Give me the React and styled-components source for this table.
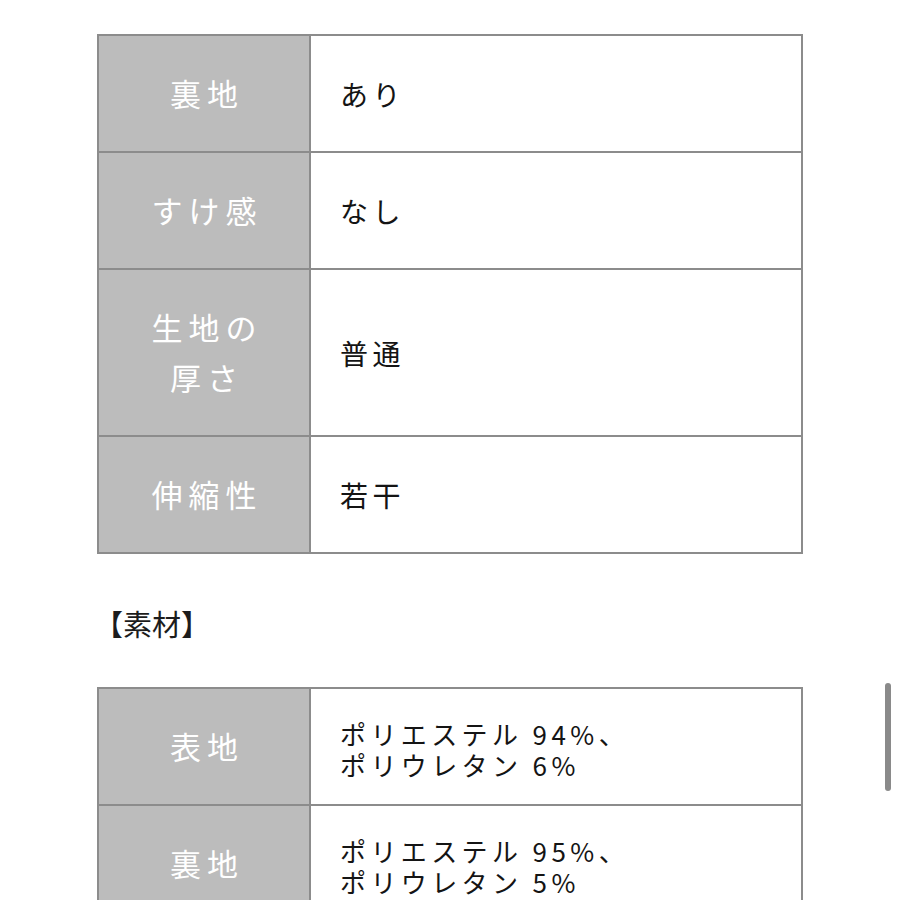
import React from "react";
import styled, { createGlobalStyle } from "styled-components";

const Global = createGlobalStyle`
  html, body { margin: 0; padding: 0; background: #fff; overflow: hidden; }
  body { font-family: "Noto Sans CJK JP", "Noto Sans", sans-serif; }
`;

const Page = styled.div`
  width: 900px;
  height: 900px;
  padding: 34px 0 0 97px;
  box-sizing: border-box;
  position: relative;
  overflow: hidden;
`;

const SpecTable = styled.table`
  width: 706px;
  border-collapse: collapse;
  border: 2px solid #8c8c8c;
  table-layout: fixed;
`;

const LabelCell = styled.th`
  width: 210px;
  background: #bcbcbc;
  color: #fff;
  font-weight: 400;
  font-size: 31px;
  line-height: 50px;
  letter-spacing: 6px;
  text-indent: 6px;
  padding: 32px 0 33px;
  border: 2px solid #8c8c8c;
  text-align: center;
  vertical-align: middle;
`;

const ValueCell = styled.td`
  background: #fff;
  color: #141414;
  font-size: ${(p) => (p.$small ? "26px" : "28px")};
  letter-spacing: ${(p) => (p.$small ? "4.4px" : "4.5px")};
  line-height: ${(p) => (p.$small ? "31px" : "40px")};
  padding: ${(p) => (p.$small ? "5px 20px 0 29px" : "0 20px 0 29px")};
  border: 2px solid #8c8c8c;
  vertical-align: middle;
`;

const Heading = styled.div`
  font-size: 29px;
  color: #1c1c1c;
  line-height: 40px;
  margin: 49px 0 44px -3px;
`;

const ScrollThumb = styled.div`
  position: absolute;
  left: 885px;
  top: 683px;
  width: 6px;
  height: 108px;
  border-radius: 3px;
  background: #8a8a8a;
`;

const specs = [
  ["裏地", ["あり"]],
  ["すけ感", ["なし"]],
  ["生地の\n厚さ", ["普通"]],
  ["伸縮性", ["若干"]],
];

const materials = [
  ["表地", ["ポリエステル 94%、", "ポリウレタン 6%"]],
  ["裏地", ["ポリエステル 95%、", "ポリウレタン 5%"]],
];

function Rows({ data, small }) {
  return (
    <tbody>
      {data.map(([label, lines], i) => (
        <tr key={i}>
          <LabelCell>
            {label.split("\n").map((l, j) => (
              <div key={j}>{l}</div>
            ))}
          </LabelCell>
          <ValueCell $small={small}>
            {lines.map((l, j) => (
              <div key={j}>{l}</div>
            ))}
          </ValueCell>
        </tr>
      ))}
    </tbody>
  );
}

export default function App() {
  return (
    <>
      <Global />
      <Page>
        <SpecTable>
          <Rows data={specs} />
        </SpecTable>
        <Heading>【素材】</Heading>
        <SpecTable>
          <Rows data={materials} small />
        </SpecTable>
        <ScrollThumb />
      </Page>
    </>
  );
}
